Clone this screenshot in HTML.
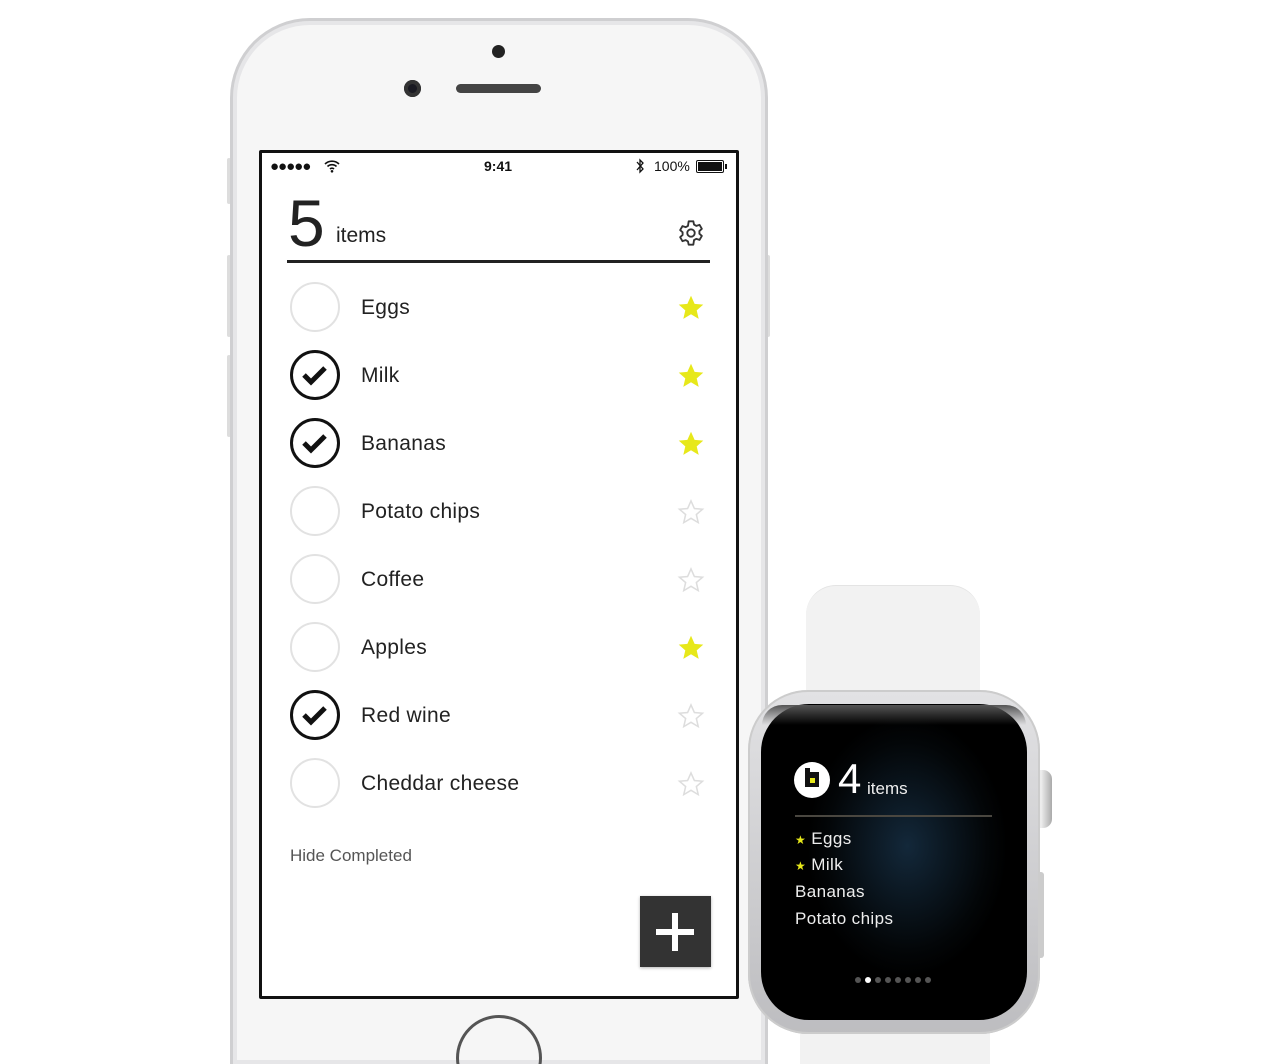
<!DOCTYPE html>
<html style="height:1064px;overflow:hidden"><head><meta charset="utf-8"><style>
*{margin:0;padding:0;box-sizing:border-box}
body{width:1280px;height:1064px;background:#fff;position:relative;overflow:hidden;font-family:"Liberation Sans",sans-serif}
.a{position:absolute}
.phone{left:230px;top:18px;width:538px;height:1046px;border-radius:80px 80px 0 0;background:#f6f6f6;border:3px solid #cfcfd1;border-bottom:none;box-shadow:inset 0 0 0 4px #e6e6e8}
.screen{left:259px;top:150px;width:480px;height:849px;background:#fff;border:3px solid #111;border-radius:2px}
.row{position:absolute;left:290px;width:420px;height:50px}
.circ{position:absolute;left:0;top:0;width:50px;height:50px;border-radius:50%;border:2px solid #e2e2e2}
.circ.on{border:3px solid #111}
.lbl{position:absolute;left:71px;top:14px;font-size:21px;color:#222;letter-spacing:.3px}
.star{position:absolute;left:387px;top:12px}
.wt{color:#eee;font-size:17px;position:absolute;left:795px;letter-spacing:.4px}
</style></head><body>
<div class="a" style="left:227px;top:158px;width:4px;height:46px;background:#ddd;border-radius:2px"></div>
<div class="a" style="left:227px;top:255px;width:4px;height:82px;background:#ddd;border-radius:2px"></div>
<div class="a" style="left:227px;top:355px;width:4px;height:82px;background:#ddd;border-radius:2px"></div>
<div class="a" style="left:766px;top:255px;width:4px;height:82px;background:#ddd;border-radius:2px"></div>
<div class="a phone"></div>
<div class="a" style="left:492px;top:45px;width:13px;height:13px;border-radius:50%;background:#222"></div>
<div class="a" style="left:404px;top:80px;width:17px;height:17px;border-radius:50%;background:#1a1a22;box-shadow:inset 0 0 0 4px #333"></div>
<div class="a" style="left:456px;top:84px;width:85px;height:9px;border-radius:5px;background:#444"></div>
<div class="a" style="left:456px;top:1015px;width:86px;height:86px;border-radius:50%;border:3px solid #555"></div>
<div class="a screen"></div>
<div class="a" style="left:270px;top:158px;font-size:15px;color:#111;letter-spacing:-1px">●●●●●</div>
<svg class="a" style="left:323px;top:159px" width="18" height="14" viewBox="0 0 18 14"><path d="M2 5a10 10 0 0 1 14 0M4.5 7.5a6.5 6.5 0 0 1 9 0M7 10a3 3 0 0 1 4 0" stroke="#111" stroke-width="1.6" fill="none"/><circle cx="9" cy="12.3" r="1.3" fill="#111"/></svg>
<div class="a" style="left:484px;top:158px;font-size:14px;font-weight:bold;color:#111">9:41</div>
<svg class="a" style="left:635px;top:158px" width="10" height="16" viewBox="0 0 10 16"><path d="M2 4l6 7-3 3V2l3 3-6 7" stroke="#111" stroke-width="1.3" fill="none"/></svg>
<div class="a" style="left:654px;top:158px;font-size:14px;color:#111">100%</div>
<div class="a" style="left:696px;top:160px;width:28px;height:13px;border:1.5px solid #111;border-radius:2px;padding:1px"><div style="width:100%;height:100%;background:#111"></div></div>
<div class="a" style="left:725px;top:164px;width:2px;height:5px;background:#111"></div>
<div class="a" style="left:288px;top:185px;font-size:66px;font-weight:300;color:#222;line-height:76px">5</div>
<div class="a" style="left:336px;top:224px;font-size:21px;color:#222">items</div>
<svg class="a" style="left:677px;top:219px" width="28" height="28" viewBox="0 0 24 24"><path d="M10 2h4l.6 2.8 2 1.1 2.7-.9 2 3.4-2.1 1.9v2.3l2.1 1.9-2 3.4-2.7-.9-2 1.1L14 22h-4l-.6-2.8-2-1.1-2.7.9-2-3.4 2.1-1.9v-2.3L2.7 9.5l2-3.4 2.7.9 2-1.1z" fill="none" stroke="#333" stroke-width="1.6" stroke-linejoin="round"/><circle cx="12" cy="12" r="3.2" fill="none" stroke="#333" stroke-width="1.6"/></svg>
<div class="a" style="left:287px;top:260px;width:423px;height:3px;background:#222"></div>
<div class="row" style="top:282px"><div class="circ"></div><div class="lbl">Eggs</div><svg class="star" width="28" height="28" viewBox="0 0 24 24"><path d="M12 1.5l3.1 7 7.4.6-5.6 4.9 1.7 7.3L12 17.4l-6.6 3.9 1.7-7.3L1.5 9.1l7.4-.6z" fill="#e7e81a"/></svg></div>
<div class="row" style="top:350px"><div class="circ on"><svg width="44" height="44" viewBox="0 0 44 44"><path d="M11 22l7 7 14-14" stroke="#111" stroke-width="5" fill="none"/></svg></div><div class="lbl">Milk</div><svg class="star" width="28" height="28" viewBox="0 0 24 24"><path d="M12 1.5l3.1 7 7.4.6-5.6 4.9 1.7 7.3L12 17.4l-6.6 3.9 1.7-7.3L1.5 9.1l7.4-.6z" fill="#e7e81a"/></svg></div>
<div class="row" style="top:418px"><div class="circ on"><svg width="44" height="44" viewBox="0 0 44 44"><path d="M11 22l7 7 14-14" stroke="#111" stroke-width="5" fill="none"/></svg></div><div class="lbl">Bananas</div><svg class="star" width="28" height="28" viewBox="0 0 24 24"><path d="M12 1.5l3.1 7 7.4.6-5.6 4.9 1.7 7.3L12 17.4l-6.6 3.9 1.7-7.3L1.5 9.1l7.4-.6z" fill="#e7e81a"/></svg></div>
<div class="row" style="top:486px"><div class="circ"></div><div class="lbl">Potato chips</div><svg class="star" width="28" height="28" viewBox="0 0 24 24"><path d="M12 2.5l2.9 6.5 7 .6-5.3 4.6 1.6 6.9L12 17.4l-6.2 3.7 1.6-6.9-5.3-4.6 7-.6z" fill="none" stroke="#ddd" stroke-width="1.3"/></svg></div>
<div class="row" style="top:554px"><div class="circ"></div><div class="lbl">Coffee</div><svg class="star" width="28" height="28" viewBox="0 0 24 24"><path d="M12 2.5l2.9 6.5 7 .6-5.3 4.6 1.6 6.9L12 17.4l-6.2 3.7 1.6-6.9-5.3-4.6 7-.6z" fill="none" stroke="#ddd" stroke-width="1.3"/></svg></div>
<div class="row" style="top:622px"><div class="circ"></div><div class="lbl">Apples</div><svg class="star" width="28" height="28" viewBox="0 0 24 24"><path d="M12 1.5l3.1 7 7.4.6-5.6 4.9 1.7 7.3L12 17.4l-6.6 3.9 1.7-7.3L1.5 9.1l7.4-.6z" fill="#e7e81a"/></svg></div>
<div class="row" style="top:690px"><div class="circ on"><svg width="44" height="44" viewBox="0 0 44 44"><path d="M11 22l7 7 14-14" stroke="#111" stroke-width="5" fill="none"/></svg></div><div class="lbl">Red wine</div><svg class="star" width="28" height="28" viewBox="0 0 24 24"><path d="M12 2.5l2.9 6.5 7 .6-5.3 4.6 1.6 6.9L12 17.4l-6.2 3.7 1.6-6.9-5.3-4.6 7-.6z" fill="none" stroke="#ddd" stroke-width="1.3"/></svg></div>
<div class="row" style="top:758px"><div class="circ"></div><div class="lbl">Cheddar cheese</div><svg class="star" width="28" height="28" viewBox="0 0 24 24"><path d="M12 2.5l2.9 6.5 7 .6-5.3 4.6 1.6 6.9L12 17.4l-6.2 3.7 1.6-6.9-5.3-4.6 7-.6z" fill="none" stroke="#ddd" stroke-width="1.3"/></svg></div>
<div class="a" style="left:290px;top:846px;font-size:17px;color:#555">Hide Completed</div>
<div class="a" style="left:640px;top:896px;width:71px;height:71px;background:#333;box-shadow:0 1px 3px rgba(0,0,0,.3)"></div>
<div class="a" style="left:656px;top:929px;width:38px;height:6px;background:#fff"></div>
<div class="a" style="left:672px;top:913px;width:6px;height:38px;background:#fff"></div>
<!-- watch -->
<div class="a" style="left:806px;top:585px;width:174px;height:140px;background:#f2f2f2;border-radius:30px 30px 0 0;border-top:1px solid #e4e4e4"></div>
<div class="a" style="left:800px;top:1010px;width:190px;height:60px;background:#f2f2f2"></div>
<div class="a" style="left:1030px;top:770px;width:22px;height:58px;border-radius:9px;background:linear-gradient(90deg,#bbb,#eee,#aaa)"></div>
<div class="a" style="left:1036px;top:872px;width:8px;height:86px;border-radius:3px;background:#ccc"></div>
<div class="a" style="left:748px;top:690px;width:292px;height:344px;border-radius:60px;background:linear-gradient(#e2e2e4,#bdbdc0);box-shadow:inset 0 0 0 2px #ccc"></div>
<div class="a" style="left:761px;top:704px;width:266px;height:316px;border-radius:48px;background:radial-gradient(ellipse 100px 130px at 55% 45%,#13283a,#030608 80%,#000)"></div>
<div class="a" style="left:762px;top:705px;width:264px;height:20px;border-radius:48px 48px 0 0;background:linear-gradient(#555,rgba(0,0,0,0))"></div>
<div class="a" style="left:794px;top:762px;width:36px;height:36px;border-radius:50%;background:#fff"></div>
<div class="a" style="left:805px;top:772px;width:14px;height:15px;background:#111"></div>
<div class="a" style="left:805px;top:768px;width:5px;height:6px;background:#111"></div>
<div class="a" style="left:810px;top:778px;width:5px;height:5px;background:#e7e81a"></div>
<div class="a" style="left:838px;top:754px;font-size:42px;color:#fff;font-weight:300;line-height:50px">4</div>
<div class="a" style="left:867px;top:779px;font-size:17px;color:#eee">items</div>
<div class="a" style="left:795px;top:815px;width:197px;height:2px;background:#4a4740"></div>
<div class="wt" style="top:829px"><span style="color:#e7e81a;font-size:12px">★</span> Eggs</div>
<div class="wt" style="top:855px"><span style="color:#e7e81a;font-size:12px">★</span> Milk</div>
<div class="wt" style="top:882px">Bananas</div>
<div class="wt" style="top:909px">Potato chips</div>
<div class="a" style="left:855px;top:977px;display:flex;gap:4px">
<i style="width:6px;height:6px;border-radius:50%;background:#555"></i><i style="width:6px;height:6px;border-radius:50%;background:#fff"></i><i style="width:6px;height:6px;border-radius:50%;background:#555"></i><i style="width:6px;height:6px;border-radius:50%;background:#555"></i><i style="width:6px;height:6px;border-radius:50%;background:#555"></i><i style="width:6px;height:6px;border-radius:50%;background:#555"></i><i style="width:6px;height:6px;border-radius:50%;background:#555"></i><i style="width:6px;height:6px;border-radius:50%;background:#555"></i>
</div>
</body></html>
